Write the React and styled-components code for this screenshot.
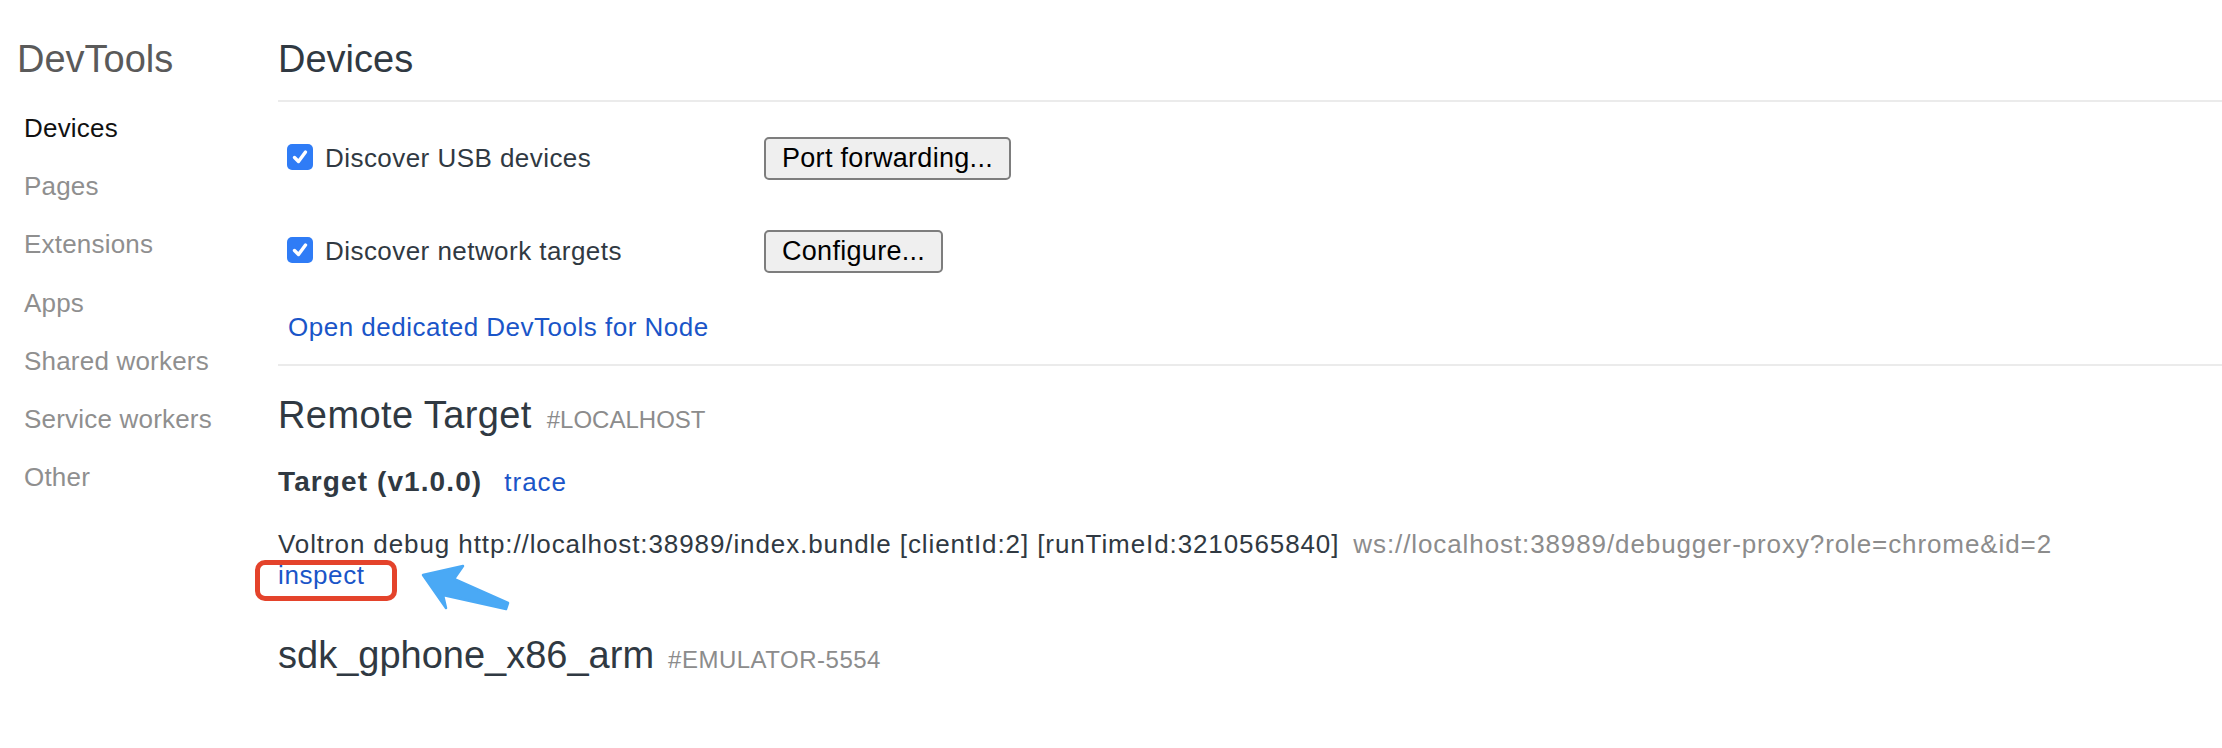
import React from "react"
import styled, { createGlobalStyle } from "styled-components"

const GlobalStyle = createGlobalStyle`
  body {
    margin: 0;
    background: #ffffff;
    font-family: "Liberation Sans", Arial, sans-serif;
    color: #303942;
  }
`

const Page = styled.div`
  display: flex;
  min-height: 748px;
`

const Sidebar = styled.nav`
  width: 278px;
  flex-shrink: 0;
  box-sizing: border-box;
  padding: 37px 0 0 17px;
`

const Brand = styled.div`
  font-size: 38px;
  line-height: 44px;
  color: #5a5a5a;
  margin-bottom: 18px;
`

const NavItem = styled.div`
  margin-left: 7px;
  font-size: 26px;
  line-height: 58.2px;
  letter-spacing: 0.2px;
  color: ${(p) => (p.$active ? "#111111" : "#8f8f8f")};
`

const Main = styled.main`
  flex: 1;
  padding-top: 37px;
`

const PageTitle = styled.h1`
  margin: 0;
  padding-bottom: 19px;
  border-bottom: 2px solid #ebebeb;
  font-size: 38px;
  line-height: 44px;
  font-weight: 400;
  color: #303942;
`

const Settings = styled.section`
  padding: 35px 0 22px 9px;
  border-bottom: 2px solid #ebebeb;
`

const OptionRow = styled.div`
  display: grid;
  grid-template-columns: 26px 427px auto;
  column-gap: 12px;
  align-items: center;
  & + & {
    margin-top: 50px;
  }
`

const CheckBox = styled.span`
  width: 26px;
  height: 26px;
  border-radius: 5px;
  background: #2f7cf6;
  display: flex;
  align-items: center;
  justify-content: center;
  margin-bottom: 3px;
`

const OptionLabel = styled.span`
  font-size: 26px;
  letter-spacing: 0.45px;
  color: #303942;
`

const Button = styled.button`
  justify-self: start;
  height: 43px;
  padding: 0 16px;
  border: 2px solid #7d7d7d;
  border-radius: 5px;
  background: #efefef;
  font-family: "Liberation Sans", Arial, sans-serif;
  font-size: 27px;
  letter-spacing: 0.3px;
  color: #000000;
`

const Link = styled.a`
  color: #1a55c8;
  text-decoration: none;
  font-size: 26px;
  letter-spacing: ${(p) => p.$spacing || "0.5px"};
`

const NodeLink = styled(Link)`
  display: block;
  margin-top: 39px;
  margin-left: 1px;
  line-height: 30px;
`

const SectionHeading = styled.h2`
  margin: ${(p) => p.$top} 0 0;
  font-size: 38px;
  line-height: 44px;
  font-weight: 400;
  letter-spacing: ${(p) => p.$spacing || "0px"};
  color: #303942;
`

const Tag = styled.span`
  margin-left: ${(p) => p.$gap || "15px"};
  font-size: 24px;
  line-height: 24px;
  letter-spacing: ${(p) => p.$spacing || "0px"};
  color: #8c8c8c;
`

const TargetRow = styled.div`
  margin-top: 29px;
  line-height: 32px;
`

const TargetName = styled.span`
  font-size: 28px;
  font-weight: 700;
  letter-spacing: 1.1px;
  color: #303942;
`

const TraceLink = styled(Link)`
  margin-left: 22px;
  line-height: 1;
  letter-spacing: 1px;
`

const DebugLine = styled.div`
  margin-top: 27px;
  font-size: 26px;
  line-height: 31px;
  letter-spacing: 0.9px;
  color: #303942;
  white-space: nowrap;
`

const SocketUrl = styled.span`
  margin-left: 14px;
  color: #8c8c8c;
`

const InspectLine = styled.div`
  line-height: 31px;
`

const Highlight = styled.span`
  position: relative;
  display: inline-block;
  &::after {
    content: "";
    position: absolute;
    left: -23px;
    top: 0;
    width: 142px;
    height: 41px;
    box-sizing: border-box;
    border: 5px solid #e4432b;
    border-radius: 10px;
  }
`

const Pointer = styled.svg`
  position: absolute;
  left: 140px;
  top: 2px;
  overflow: visible;
`

function Check() {
  return (
    <svg width="20" height="20" viewBox="0 0 20 20">
      <polyline
        points="4.5,10.5 8.5,14.5 15.5,5"
        fill="none"
        stroke="#ffffff"
        strokeWidth="3.4"
        strokeLinecap="round"
        strokeLinejoin="round"
      />
    </svg>
  )
}

const navItems = [
  "Devices",
  "Pages",
  "Extensions",
  "Apps",
  "Shared workers",
  "Service workers",
  "Other",
]

export default function App() {
  return (
    <Page>
      <GlobalStyle />
      <Sidebar>
        <Brand>DevTools</Brand>
        {navItems.map((item, i) => (
          <NavItem key={item} $active={i === 0}>
            {item}
          </NavItem>
        ))}
      </Sidebar>

      <Main>
        <PageTitle>Devices</PageTitle>

        <Settings>
          <OptionRow>
            <CheckBox>
              <Check />
            </CheckBox>
            <OptionLabel>Discover USB devices</OptionLabel>
            <Button>Port forwarding...</Button>
          </OptionRow>
          <OptionRow>
            <CheckBox>
              <Check />
            </CheckBox>
            <OptionLabel>Discover network targets</OptionLabel>
            <Button>Configure...</Button>
          </OptionRow>
          <NodeLink href="#">Open dedicated DevTools for Node</NodeLink>
        </Settings>

        <SectionHeading $top="27px" $spacing="0.4px">
          Remote Target<Tag>#LOCALHOST</Tag>
        </SectionHeading>

        <TargetRow>
          <TargetName>Target (v1.0.0)</TargetName>
          <TraceLink href="#">trace</TraceLink>
        </TargetRow>

        <DebugLine>
          Voltron debug http://localhost:38989/index.bundle [clientId:2]
          [runTimeId:3210565840]
          <SocketUrl>ws://localhost:38989/debugger-proxy?role=chrome&amp;id=2</SocketUrl>
        </DebugLine>

        <InspectLine>
          <Highlight>
            <Link href="#" $spacing="0.6px">
              inspect
            </Link>
            <Pointer width="100" height="50" viewBox="0 0 100 50">
              <polygon
                points="5,13 45,4 36,17 90,41 88,47 25,33 28,46"
                fill="#4aa9f5"
                stroke="#4aa9f5"
                strokeWidth="2.5"
                strokeLinejoin="round"
              />
            </Pointer>
          </Highlight>
        </InspectLine>

        <SectionHeading $top="39px">
          sdk_gphone_x86_arm<Tag $gap="14px" $spacing="0.5px">#EMULATOR-5554</Tag>
        </SectionHeading>
      </Main>
    </Page>
  )
}
